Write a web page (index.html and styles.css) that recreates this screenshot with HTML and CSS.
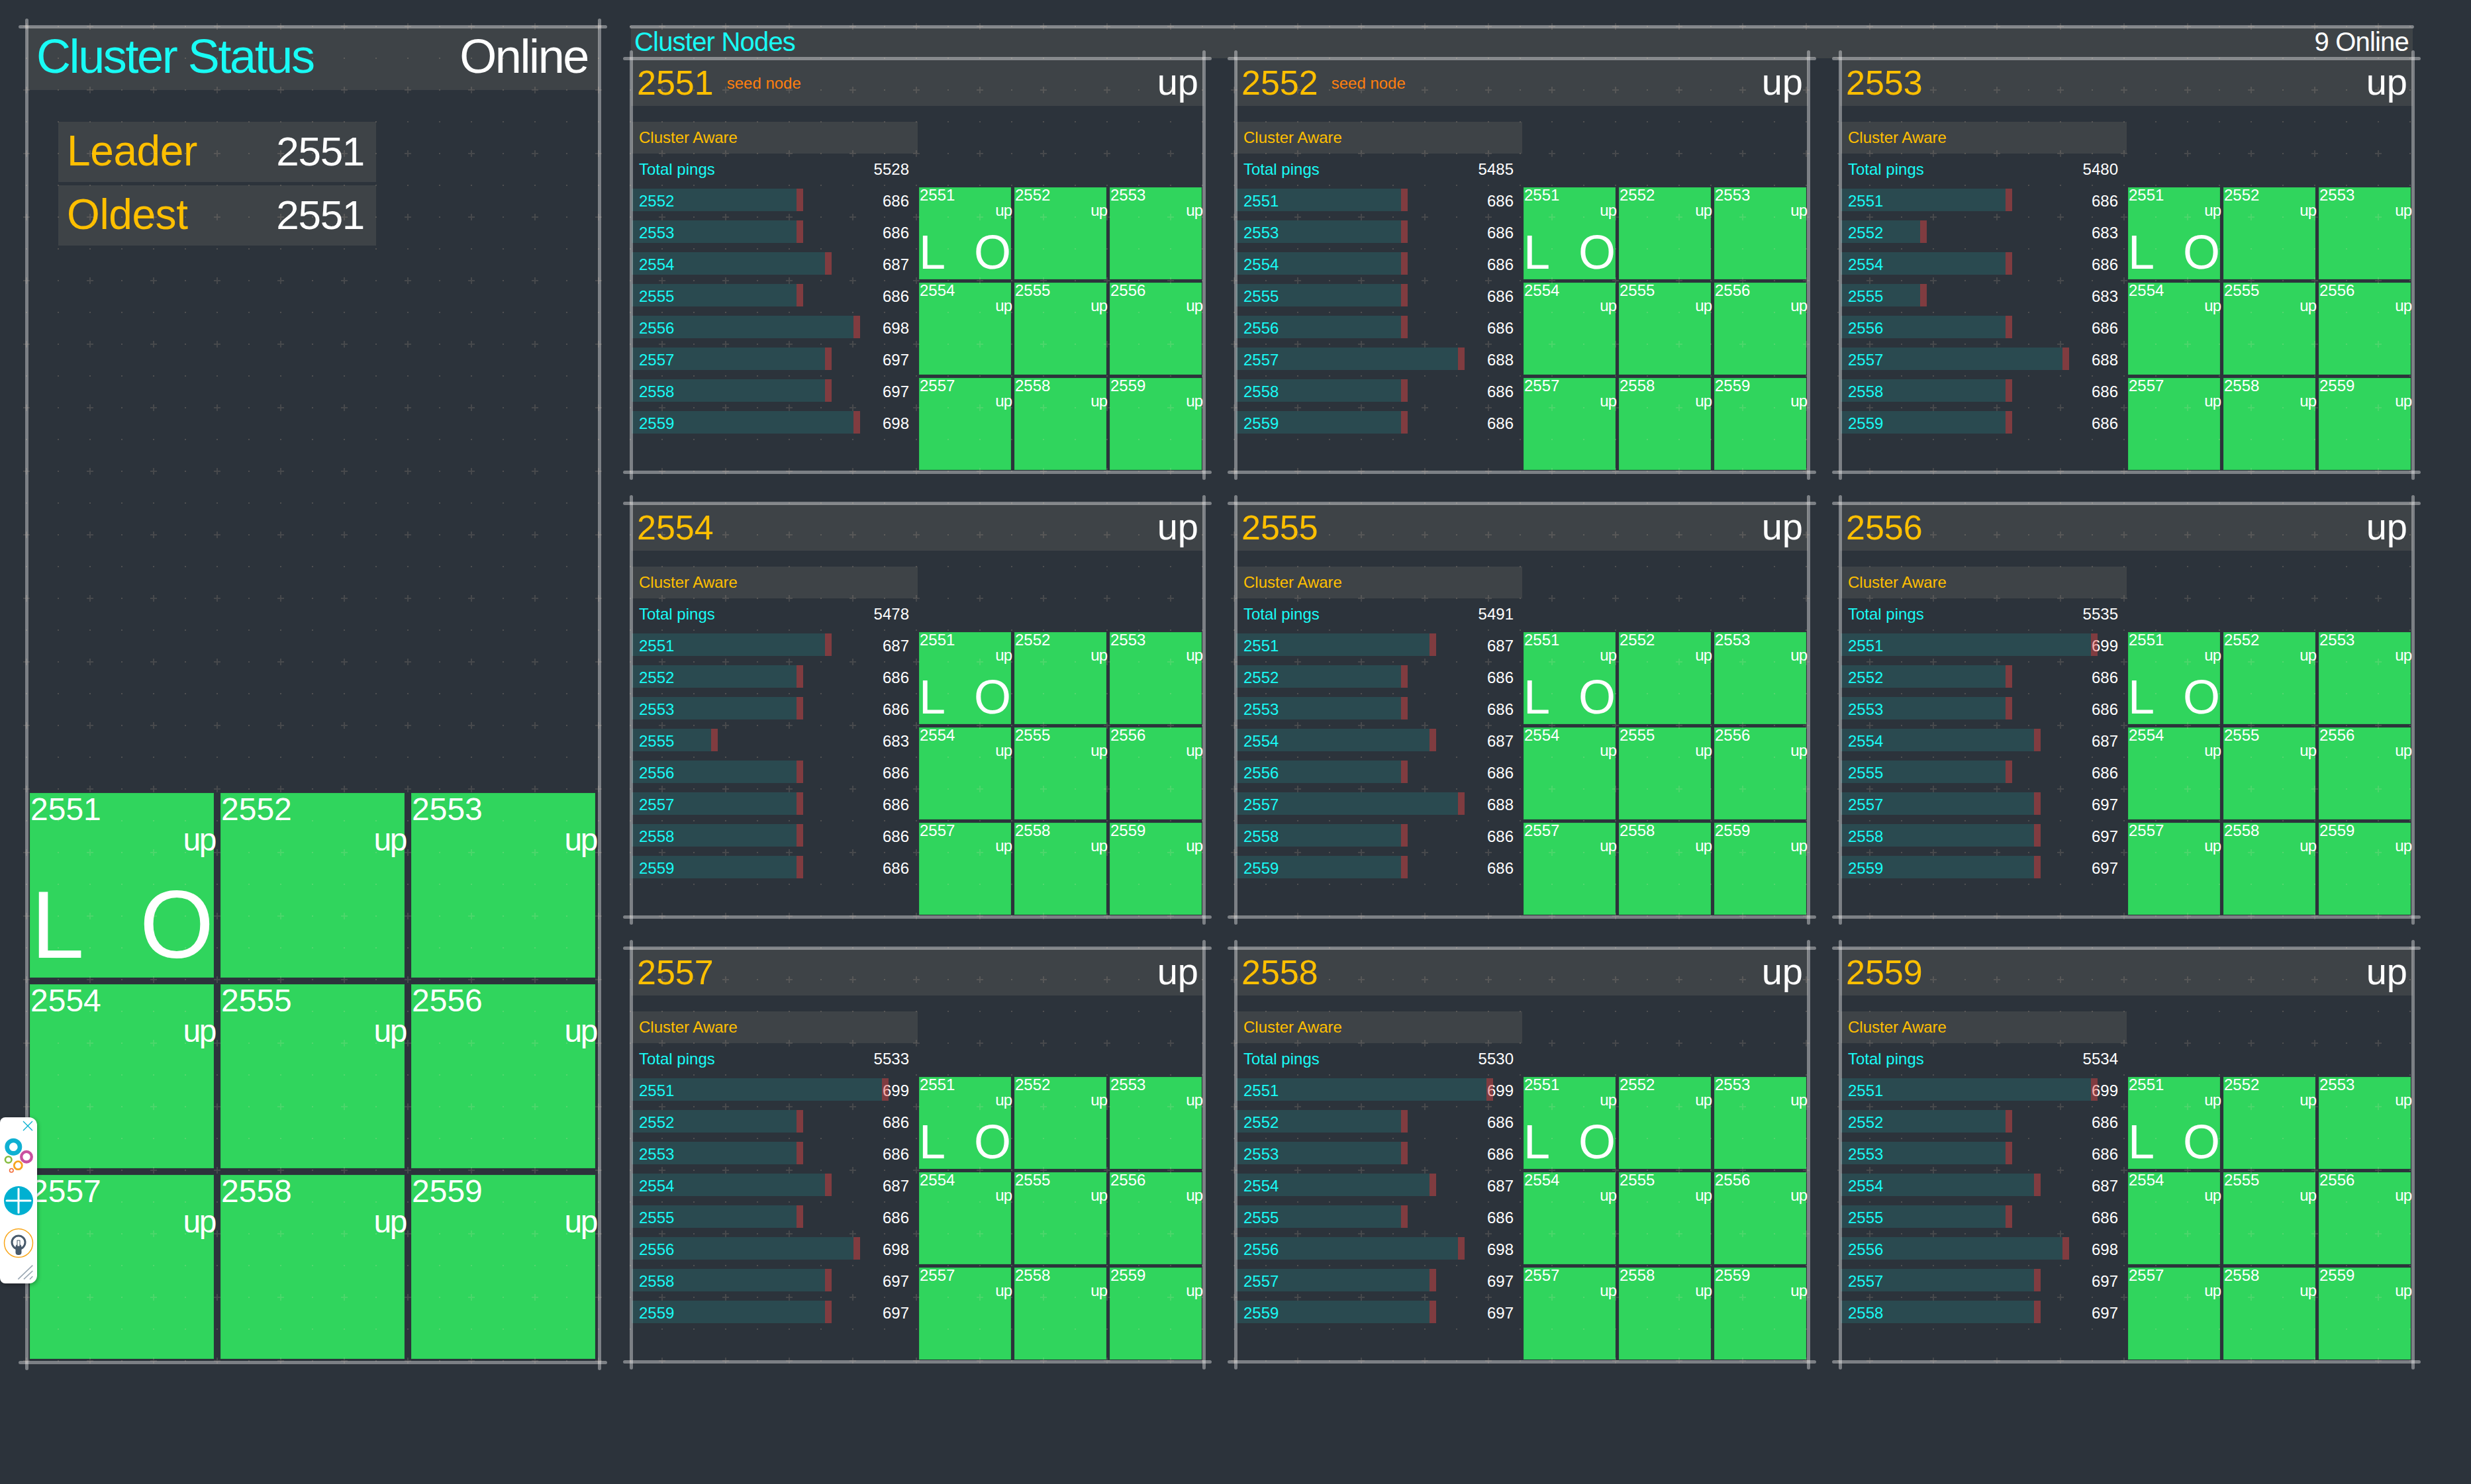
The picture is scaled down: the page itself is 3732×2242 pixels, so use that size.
FILE: index.html
```html
<!DOCTYPE html>
<html lang="en">
<head>
<meta charset="utf-8">
<title>Cluster Status</title>
<link rel="stylesheet" href="styles.css">
</head>
<body>
<main class="dash">
  <section class="status">
    <span class="ln ln-h ln-top"></span><span class="ln ln-h ln-bottom"></span><span class="ln ln-v ln-left"></span><span class="ln ln-v ln-right"></span>
    <header class="status-head"><span class="status-title">Cluster Status</span><span class="status-state">Online</span></header>
    <div class="stats">
      <div class="stat"><span class="stat-key">Leader</span><span class="stat-val">2551</span></div>
      <div class="stat"><span class="stat-key">Oldest</span><span class="stat-val">2551</span></div>
    </div>
    <div class="tiles tiles-lg" id="main-tiles"></div>
  </section>
  <section class="nodes">
    <span class="ln ln-h ln-nodes"></span>
    <header class="nodes-head"><span class="nodes-title">Cluster Nodes</span><span class="nodes-count">9 Online</span></header>
    <div class="node-grid" id="node-grid"></div>
  </section>
</main>
<svg class="dots" width="3660" height="2070" aria-hidden="true">
  <defs>
    <pattern id="dotgrid" x="16" y="16" width="96" height="96" patternUnits="userSpaceOnUse">
      <rect x="19" y="23" width="10" height="2" class="cross"/>
      <rect x="23" y="19" width="2" height="4" class="cross"/>
      <rect x="23" y="25" width="2" height="4" class="cross"/>
      <rect x="71" y="23" width="2" height="2" class="dot"/>
      <rect x="23" y="71" width="2" height="2" class="dot"/>
      <rect x="71" y="71" width="2" height="2" class="dot"/>
    </pattern>
  </defs>
  <rect x="34" y="34" width="3612" height="2026" fill="url(#dotgrid)"/>
</svg>
<aside class="widget">
  <svg width="56" height="251" viewBox="0 0 56 251" fill="none">
    <path d="M35 6L49 20M49 6L35 20" stroke="#00aecf" stroke-width="1.3"/>
    <circle cx="20.3" cy="44.7" r="9.7" stroke="#0fb0d2" stroke-width="6.6"/>
    <circle cx="40" cy="59.7" r="7.8" stroke="#c9509f" stroke-width="4.3"/>
    <circle cx="12.7" cy="64" r="4.8" stroke="#86bc40" stroke-width="2.6"/>
    <circle cx="27.3" cy="72.7" r="6" stroke="#f7a41d" stroke-width="2.8"/>
    <circle cx="17.3" cy="80.3" r="2.8" stroke="#f26a36" stroke-width="1.5"/>
    <circle cx="28" cy="126" r="22" fill="#00b0d1"/>
    <path d="M10 126H46M28 108V144" stroke="#fff" stroke-width="3" stroke-linecap="round"/>
    <circle cx="28" cy="190" r="21.5" stroke="#f9a61a" stroke-width="1.5"/>
    <circle cx="28" cy="189" r="10" stroke="#47596b" stroke-width="3"/>
    <rect x="23.5" y="192" width="9" height="16" rx="4" fill="#47596b"/>
    <rect x="26" y="186" width="4" height="9" fill="#fff" stroke="#47596b" stroke-width="1"/>
    <path d="M27.3 244.7L49.3 223.7M36 244.7L49.3 232M45 244.7L49.3 240.3" stroke="#9aa7b3" stroke-width="1.6"/>
  </svg>
</aside>
<script src="app.js"></script>
</body>
</html>
```
FILE: styles.css
```css
* { box-sizing: border-box; }
html, body { margin: 0; height: 2242px; }
body {
  background: #2c333b;
  color: #fff;
  font-family: "Liberation Sans", Arial, sans-serif;
  overflow: hidden;
  position: relative;
}
.dash { display: flex; gap: 48px; padding: 40px 0 0 40px; align-items: flex-start; }

/* frame lines */
.ln { position: absolute; background: rgba(255,255,255,.38); border-radius: 3px; z-index: 3; }
.ln-h { height: 5px; left: -12px; right: -12px; }
.ln-v { width: 5px; top: -12px; bottom: -12px; }
.ln-top { top: -2.5px; }
.ln-bottom { bottom: -2.5px; }
.ln-left { left: -2.5px; }
.ln-right { right: -2.5px; }
.ln-nodes { top: -2.5px; left: -2px; right: -2px; }

/* left panel */
.status { position: relative; width: 865px; height: 2018px; display: flex; flex-direction: column; }
.status-head {
  height: 96px; line-height: 90px; background: #3e4347; font-size: 72px; letter-spacing: -2.4px;
  display: flex; justify-content: space-between; padding: 0 17px 0 15px;
}
.status-title { color: #19fbf5; }
.stats { margin: 48px 0 0 48px; width: 480px; display: flex; flex-direction: column; gap: 5px; }
.stat {
  height: 91px; line-height: 88px; background: #3e4347;
  display: flex; justify-content: space-between; align-items: baseline;
  padding: 0 18px 0 13px;
}
.stat-key { color: #ffbf00; font-size: 64px; letter-spacing: -.4px; }
.stat-val { font-size: 62px; letter-spacing: -1.3px; }

/* tiles */
.tiles { display: grid; }
.tile { background: #30d55d; box-shadow: inset 0 0 0 1px rgba(0,0,0,.06); min-width: 0; }
.tile-id, .tile-up { display: block; }
.tile-up { text-align: right; }
.tile-flags { display: flex; justify-content: space-between; }

.tiles-lg {
  margin: auto 0 5px 5px;
  grid-template-columns: repeat(3, 278px);
  grid-template-rows: 279px 278px 278px;
  gap: 10px;
}
.tiles-lg .tile { padding-top: 2px; font-size: 48px; line-height: 46px; }
.tiles-lg .tile-id { padding-left: 1px; }
.tiles-lg .tile-up { margin-right: -2px; letter-spacing: -2.5px; }
.tiles-lg .tile-flags { font-size: 144px; line-height: 212px; padding: 0 0 0 2px; }

.tiles-sm {
  margin-top: 123px;
  grid-template-columns: repeat(3, 139px);
  grid-template-rows: repeat(3, 139px);
  gap: 5px;
}
.tiles-sm .tile { font-size: 24px; line-height: 23px; }
.tiles-sm .tile-id { padding-left: 1px; }
.tiles-sm .tile-up { margin-right: -1px; letter-spacing: -1px; }
.tiles-sm .tile-flags { font-size: 72px; line-height: 104px; }

/* right panel */
.nodes { position: relative; width: 2691px; }
.nodes-head {
  height: 48px; line-height: 46px; background: #3e4347; font-size: 40px; letter-spacing: -.8px;
  display: flex; justify-content: space-between; padding: 0 6px 0 5px;
}
.nodes-title { color: #19fbf5; }
.node-grid {
  display: grid;
  grid-template-columns: repeat(3, 865px);
  grid-auto-rows: 625px;
  column-gap: 48px;
  row-gap: 47px;
}
.node { position: relative; }
.node-head {
  height: 72px; line-height: 72px; background: #3e4347;
  display: flex; align-items: baseline; padding: 0 8px 0 9px;
}
.node-id { color: #ffbf00; font-size: 52px; }
.node-seed { color: #ff7f0e; font-size: 24px; line-height: 24px; align-self: flex-start; margin: 26px 0 0 20px; }
.node-up { font-size: 56px; margin-left: auto; }
.node-body { display: flex; }
.node-side { width: 435px; padding-top: 24px; }
.aware {
  margin-left: 1px; width: 432px; height: 48px; line-height: 48px; background: #3e4347;
  color: #ffbf00; font-size: 24px; padding-left: 11px;
}
.row {
  position: relative; width: 433px; height: 48px; line-height: 48px; font-size: 24px;
  display: flex; justify-content: space-between; padding: 0 13px 0 12px;
}
.row-key { color: #19fbf5; position: relative; z-index: 1; }
.bar {
  position: absolute; left: 1px; top: 5px; height: 34px;
  background: linear-gradient(#2a4a50, #2a4a50) no-repeat;
  background-size: calc(100% - 10px) 100%;
}
.bar::after { content: ""; position: absolute; right: 0; top: 0; bottom: 0; width: 10px; background: rgba(230,70,70,.45); }

/* dot grid overlay */
.dots { position: absolute; left: 0; top: 0; pointer-events: none; z-index: 4; }
.cross { fill: rgba(255,225,190,.13); }
.dot { fill: rgba(255,225,190,.17); }

/* floating widget */
.widget {
  position: absolute; left: 0; top: 1688px; width: 56px; height: 251px; z-index: 5;
  background: #fff; border-radius: 8px 12px 12px 8px; box-shadow: 1px 2px 6px rgba(0,0,0,.3);
}
.widget svg { display: block; }
```
FILE: app.js
```js
var IDS = [2551, 2552, 2553, 2554, 2555, 2556, 2557, 2558, 2559];
var BAR = { 683: 130, 686: 259, 687: 302, 688: 345, 697: 302, 698: 345, 699: 388 };
var NODES = [
  { id: 2551, seed: true, total: 5528, pings: [686, 686, 687, 686, 698, 697, 697, 698] },
  { id: 2552, seed: true, total: 5485, pings: [686, 686, 686, 686, 686, 688, 686, 686] },
  { id: 2553, total: 5480, pings: [686, 683, 686, 683, 686, 688, 686, 686] },
  { id: 2554, total: 5478, pings: [687, 686, 686, 683, 686, 686, 686, 686] },
  { id: 2555, total: 5491, pings: [687, 686, 686, 687, 686, 688, 686, 686] },
  { id: 2556, total: 5535, pings: [699, 686, 686, 687, 686, 697, 697, 697] },
  { id: 2557, total: 5533, pings: [699, 686, 686, 687, 686, 698, 697, 697] },
  { id: 2558, total: 5530, pings: [699, 686, 686, 687, 686, 698, 697, 697] },
  { id: 2559, total: 5534, pings: [699, 686, 686, 687, 686, 698, 697, 697] }
];

function tilesHtml() {
  return IDS.map(function (id, i) {
    var flags = i === 0 ? '<div class="tile-flags"><span>L</span><span>O</span></div>' : '';
    return '<div class="tile"><span class="tile-id">' + id + '</span><span class="tile-up">up</span>' + flags + '</div>';
  }).join('');
}

function nodeHtml(node) {
  var peers = IDS.filter(function (id) { return id !== node.id; });
  var rows = peers.map(function (peer, i) {
    var v = node.pings[i];
    return '<div class="row"><span class="row-key">' + peer + '</span><span>' + v + '</span>' +
      '<span class="bar" style="width:' + BAR[v] + 'px"></span></div>';
  }).join('');
  return '<article class="node">' +
    '<span class="ln ln-h ln-top"></span><span class="ln ln-h ln-bottom"></span><span class="ln ln-v ln-left"></span><span class="ln ln-v ln-right"></span>' +
    '<header class="node-head"><span class="node-id">' + node.id + '</span>' +
    (node.seed ? '<span class="node-seed">seed node</span>' : '') +
    '<span class="node-up">up</span></header>' +
    '<div class="node-body"><div class="node-side"><div class="aware">Cluster Aware</div>' +
    '<div class="row"><span class="row-key">Total pings</span><span>' + node.total + '</span></div>' + rows +
    '</div><div class="tiles tiles-sm">' + tilesHtml() + '</div></div></article>';
}

document.getElementById('main-tiles').innerHTML = tilesHtml();
document.getElementById('node-grid').innerHTML = NODES.map(nodeHtml).join('');
```
